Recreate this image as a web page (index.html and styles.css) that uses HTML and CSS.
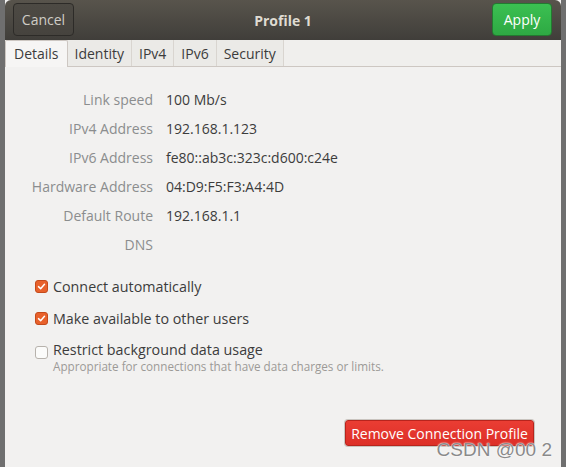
FILE: index.html
```html
<!DOCTYPE html>
<html>
<head>
<meta charset="utf-8">
<link rel="stylesheet" href="styles.css">
</head>
<body>
<div class="dialog">
  <header class="headerbar">
    <button class="hb-btn cancel">Cancel</button>
    <div class="title">Profile 1</div>
    <button class="hb-btn apply">Apply</button>
  </header>
  <nav class="tabs">
    <div class="tab active">Details</div>
    <div class="tab">Identity</div>
    <div class="tab">IPv4</div>
    <div class="tab">IPv6</div>
    <div class="tab">Security</div>
  </nav>
  <main class="content">
    <div class="info">
      <div class="lbl">Link speed</div><div class="val">100 Mb/s</div>
      <div class="lbl">IPv4 Address</div><div class="val">192.168.1.123</div>
      <div class="lbl">IPv6 Address</div><div class="val">fe80::ab3c:323c:d600:c24e</div>
      <div class="lbl">Hardware Address</div><div class="val">04:D9:F5:F3:A4:4D</div>
      <div class="lbl">Default Route</div><div class="val">192.168.1.1</div>
      <div class="lbl">DNS</div><div class="val"></div>
    </div>
    <div class="checks">
      <div class="check">
        <span class="box on"><svg viewBox="0 0 14 14" width="14" height="14"><path d="M3.2 7.2 L5.9 9.8 L10.8 4.2" fill="none" stroke="#fff" stroke-width="1.9" stroke-linecap="round" stroke-linejoin="round"/></svg></span>
        <span class="ctext">Connect automatically</span>
      </div>
      <div class="check">
        <span class="box on"><svg viewBox="0 0 14 14" width="14" height="14"><path d="M3.2 7.2 L5.9 9.8 L10.8 4.2" fill="none" stroke="#fff" stroke-width="1.9" stroke-linecap="round" stroke-linejoin="round"/></svg></span>
        <span class="ctext">Make available to other users</span>
      </div>
      <div class="check multi">
        <span class="box"></span>
        <div class="ctexts">
          <span class="ctext">Restrict background data usage</span>
          <span class="sub">Appropriate for connections that have data charges or limits.</span>
        </div>
      </div>
    </div>
    <div class="actions">
      <button class="remove">Remove Connection Profile</button>
    </div>
  </main>
  <div class="watermark">CSDN @00 2</div>
</div>
</body>
</html>
```
FILE: styles.css
```css
html, body {
  margin: 0;
  padding: 0;
}
body {
  width: 566px;
  height: 467px;
  overflow: hidden;
  background: #6f6f6f;
  font-family: "Open Sans", "Noto Sans", sans-serif;
  font-size: 14px;
  position: relative;
}
.dialog {
  margin-left: 5px;
  width: 556px;
  height: 467px;
  background: #f2f1f0;
  display: flex;
  flex-direction: column;
  position: relative;
}
.headerbar {
  height: 40px;
  box-sizing: border-box;
  background: linear-gradient(#58544c, #403e3a);
  border-radius: 6px 6px 0 0;
  display: flex;
  align-items: center;
  justify-content: space-between;
  padding: 0 9px 0 8px;
  position: relative;
}
.hb-btn {
  font-family: inherit;
  font-size: 14px;
  height: 33px;
  border-radius: 4px;
  padding: 0;
  margin-top: -1px;
}
.cancel {
  width: 61px;
  color: #cfccc6;
  background: linear-gradient(#4d4a44, #46433e);
  border: 1px solid #2d2b28;
}
.apply {
  width: 60px;
  color: #ffffff;
  background: linear-gradient(#3bc052, #2ea943);
  border: 1px solid #237a30;
}
.title {
  position: absolute;
  left: 0;
  right: 0;
  text-align: center;
  color: #dfdbd2;
  font-weight: bold;
  pointer-events: none;
}
.tabs {
  height: 27px;
  box-sizing: border-box;
  display: flex;
  border-bottom: 1px solid #cdc7c2;
  background: #f0efed;
}
.tab {
  height: 26px;
  box-sizing: border-box;
  display: flex;
  align-items: center;
  padding: 0 7px;
  color: #3c3c3c;
  background: #ebeae7;
  border-right: 1px solid #d9d5d0;
}
.tab.active {
  background: #f6f5f4;
  border: 1px solid #cdc7c2;
  border-bottom: none;
  height: 27px;
  margin-bottom: -1px;
  padding: 0 8px 1px;
  border-radius: 2px 2px 0 0;
}
.content {
  flex: 1;
  display: flex;
  flex-direction: column;
  padding-top: 18px;
}
.info {
  display: grid;
  grid-template-columns: 148px 1fr;
  column-gap: 13px;
  grid-auto-rows: 29px;
  align-items: center;
}
.lbl {
  text-align: right;
  color: #8b8d8e;
}
.val {
  color: #3c3c3c;
}
.checks {
  padding-left: 30px;
  margin-top: 17px;
  display: flex;
  flex-direction: column;
  gap: 12px;
}
.check {
  display: flex;
  align-items: center;
  gap: 5px;
  height: 20px;
  color: #3c3c3c;
  font-size: 14.3px;
}
.check.multi {
  align-items: flex-start;
  height: auto;
}
.box {
  width: 13px;
  height: 13px;
  box-sizing: border-box;
  border-radius: 3px;
  border: 1px solid #b7b2ac;
  background: #fbfbfa;
  flex: none;
  display: flex;
  align-items: center;
  justify-content: center;
}
.box svg {
  width: 13px;
  height: 13px;
}
.box.on {
  background: #e8612b;
  border-color: #c44a1b;
}
.multi .box {
  margin-top: 6px;
}
.ctexts {
  display: flex;
  flex-direction: column;
}
.sub {
  font-size: 11.7px;
  color: #9c9a97;
  margin-top: -1px;
}
.actions {
  margin-top: auto;
  display: flex;
  justify-content: flex-end;
  padding: 0 27px 21px 0;
}
.remove {
  font-family: inherit;
  font-size: 14px;
  color: #ffffff;
  background: linear-gradient(#ea3d33, #dd2f27);
  border: 1px solid #b8241d;
  box-shadow: 0 0 0 1px #c9c4bf;
  border-radius: 3px;
  width: 189px;
  height: 26px;
  padding: 0;
}
.watermark {
  position: absolute;
  right: 9px;
  bottom: 6px;
  font-family: "Liberation Sans", Arial, sans-serif;
  font-size: 19px;
  color: #8a8a8a;
  text-shadow: 0 0 1px #ffffff, 0 0 2px #ffffff;
}
```
